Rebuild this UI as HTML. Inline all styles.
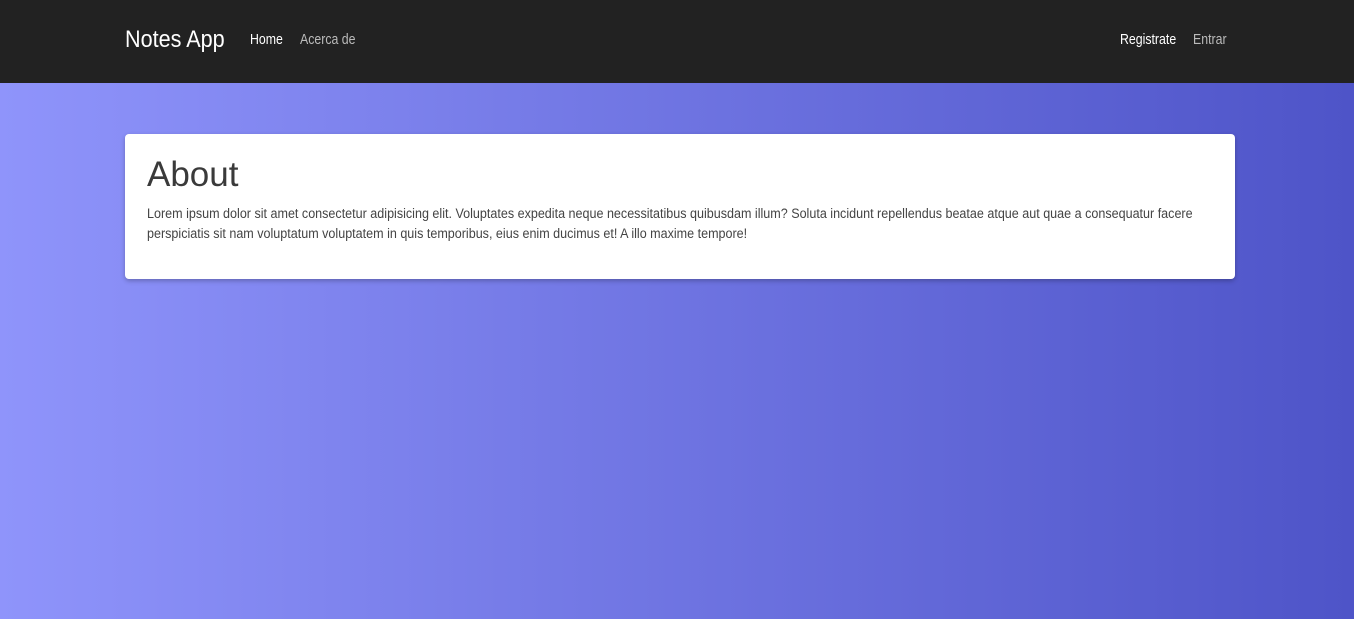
<!DOCTYPE html>
<html><head><meta charset="utf-8"><style>
*{margin:0;padding:0;box-sizing:border-box}
html,body{width:1354px;height:619px;overflow:hidden}
body{background:linear-gradient(to right,#8f94fb,#4e54c8);font-family:"Liberation Sans",sans-serif;}
nav{height:83px;background:#222;position:relative}
.brand{position:absolute;left:125px;top:25px;color:#fff;font-size:24px;line-height:30px;transform:scaleX(.9);transform-origin:left}
.l{position:absolute;top:31px;font-size:14.5px;line-height:18px;color:#bbb;transform:scaleX(.85);transform-origin:left;white-space:nowrap}
.card{position:absolute;left:125px;top:134px;width:1110px;height:145px;background:#fff;border-radius:4px;box-shadow:0 2px 5px rgba(0,0,0,.25);padding:20px 22px}
h1{font-weight:normal;font-size:35px;line-height:42px;color:#3a3a3a;margin-bottom:8px}
p{font-size:14.2px;line-height:20px;color:#444;width:1205px;transform:scaleX(.885);transform-origin:left}
</style></head><body>
<nav><div class="brand">Notes App</div>
<div class="l" style="left:250px;color:#fff">Home</div>
<div class="l" style="left:300px">Acerca de</div>
<div class="l" style="left:1120px;color:#fff">Registrate</div>
<div class="l" style="left:1193px">Entrar</div></nav>
<div class="card"><h1>About</h1>
<p>Lorem ipsum dolor sit amet consectetur adipisicing elit. Voluptates expedita neque necessitatibus quibusdam illum? Soluta incidunt repellendus beatae atque aut quae a consequatur facere perspiciatis sit nam voluptatum voluptatem in quis temporibus, eius enim ducimus et! A illo maxime tempore!</p></div>
</body></html>
